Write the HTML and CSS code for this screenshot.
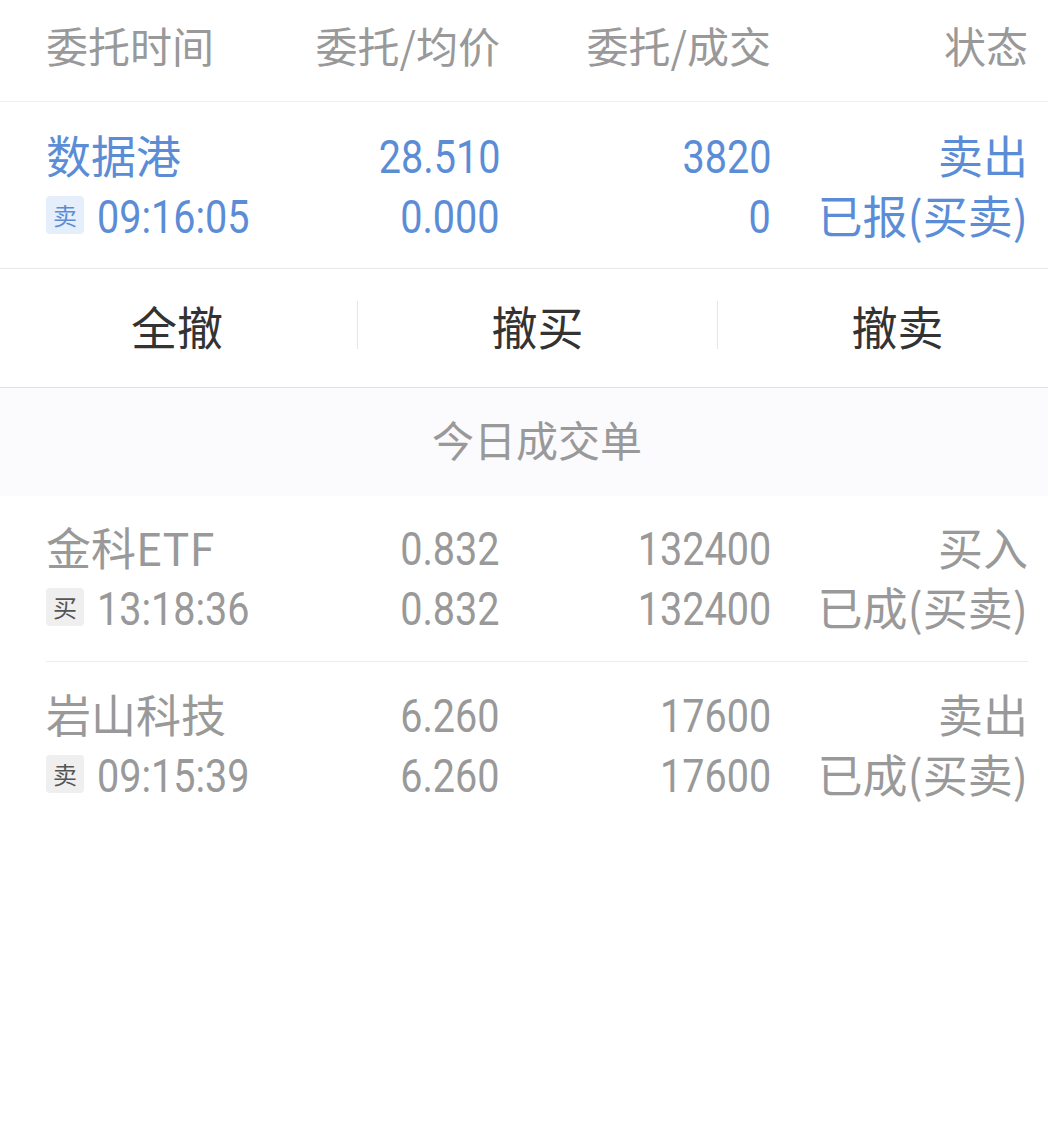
FILE: index.html
```html
<!DOCTYPE html>
<html lang="zh-CN">
<head>
    <meta charset="UTF-8">
    <meta name="viewport" content="width=device-width, initial-scale=1.0">
    <title>委托</title>
    <link rel="stylesheet" href="styles.css">
</head>
<body>

    <div class="row head">
        <div>委托时间</div>
        <div class="r">委托/均价</div>
        <div class="r">委托/成交</div>
        <div class="r">状态</div>
    </div>

    <div class="row order blue">
        <div class="name">数据港</div>
        <div class="r"><span class="num">28.510</span></div>
        <div class="r"><span class="num">3820</span></div>
        <div class="r">卖出</div>
        <div class="time"><span class="tag tag-blue">卖</span><span class="num">09:16:05</span></div>
        <div class="r"><span class="num">0.000</span></div>
        <div class="r"><span class="num">0</span></div>
        <div class="r">已报(买卖)</div>
    </div>

    <div class="wide">
        <div class="actions">
            <div class="act">全撤</div>
            <div class="act">撤买</div>
            <div class="act">撤卖</div>
        </div>
        <div class="section">今日成交单</div>
    </div>

    <div class="trades">
        <div class="row trade">
            <div class="name">金科ETF</div>
            <div class="r"><span class="num">0.832</span></div>
            <div class="r"><span class="num">132400</span></div>
            <div class="r">买入</div>
            <div class="time"><span class="tag">买</span><span class="num">13:18:36</span></div>
            <div class="r"><span class="num">0.832</span></div>
            <div class="r"><span class="num">132400</span></div>
            <div class="r">已成(买卖)</div>
        </div>
        <div class="row trade">
            <div class="name">岩山科技</div>
            <div class="r"><span class="num">6.260</span></div>
            <div class="r"><span class="num">17600</span></div>
            <div class="r">卖出</div>
            <div class="time"><span class="tag">卖</span><span class="num">09:15:39</span></div>
            <div class="r"><span class="num">6.260</span></div>
            <div class="r"><span class="num">17600</span></div>
            <div class="r">已成(买卖)</div>
        </div>
    </div>

</body>
</html>
```

FILE: styles.css
```css
body {
    margin: 0;
    background: #fff;
    font-family: "Noto Sans CJK SC", "Noto Sans", sans-serif;
    color: #999;
    overflow-x: hidden;
}

.row {
    display: grid;
    grid-template-columns: minmax(0, 1fr) 230px 271px 257px;
    padding: 0 20px 0 46px;
}

.r {
    text-align: right;
}

.head {
    height: 102px;
    box-sizing: border-box;
    padding-bottom: 13px;
    align-items: center;
    font-size: 42px;
    color: #999;
    border-bottom: 1px solid #efefef;
}

.order {
    padding-top: 23px;
    padding-bottom: 23px;
    border-bottom: 1px solid #e8e8e8;
}

.order, .trade {
    font-size: 45px;
}

.order > div, .trade > div {
    height: 60px;
    line-height: 60px;
}

.blue {
    color: #5b8dd7;
}

/* digits are narrower than Roboto in the app font */
.num {
    display: inline-block;
    vertical-align: top;
    height: 60px;
    line-height: 64px;
    font-family: Roboto, sans-serif;
    font-size: 46px;
    transform: scaleX(0.86);
    transform-origin: right center;
}

.time {
    display: flex;
    align-items: center;
    white-space: nowrap;
}

.time .num {
    transform-origin: left center;
}

.tag {
    flex: none;
    width: 38px;
    height: 38px;
    line-height: 38px;
    text-align: center;
    font-size: 24px;
    border-radius: 4px;
    margin-right: 13px;
    background: #efefef;
    color: #555;
}

.tag-blue {
    background: #e5eefb;
    color: #5b8dd7;
}

.wide {
    width: 1080px;
    margin-left: -3px;
}

.actions {
    display: grid;
    grid-template-columns: repeat(3, 1fr);
    height: 119px;
    box-sizing: border-box;
    padding-bottom: 6px;
    align-items: center;
    border-bottom: 1px solid #e0e0e0;
}

.act {
    text-align: center;
    font-size: 46px;
    color: #333;
    line-height: 48px;
}

.act + .act {
    border-left: 1px solid #e6e6e6;
}

.section {
    height: 108px;
    line-height: 102px;
    padding-bottom: 6px;
    box-sizing: border-box;
    text-align: center;
    background: #fbfafd;
    font-size: 42px;
    color: #999;
}

.trade {
    padding-top: 21px;
    padding-bottom: 24px;
    color: #999;
}

.trade:first-child {
    margin: 0 20px 0 46px;
    padding-left: 0;
    padding-right: 0;
    border-bottom: 1px solid #ececec;
}

.trade + .trade {
    padding-top: 22px;
}
```
